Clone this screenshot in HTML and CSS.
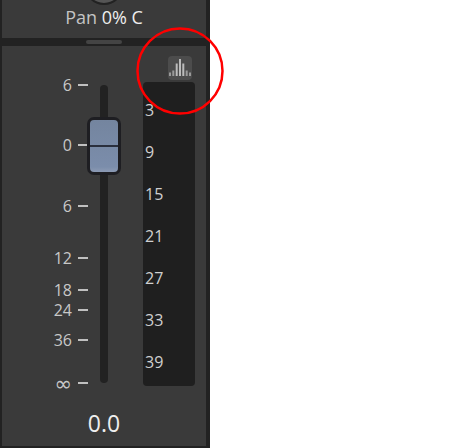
FILE: index.html
```html
<!DOCTYPE html>
<html lang="en">
<head>
<meta charset="utf-8">
<title>Channel strip</title>
<link rel="stylesheet" href="styles.css">
</head>
<body>
<div class="strip">
  <section class="pan">
    <div class="knob"></div>
    <div class="pan-label"><span class="muted">Pan</span> 0% C</div>
  </section>
  <div class="divider"><span class="grip"></span></div>
  <section class="fader-panel">
    <div class="fader-main">
      <div class="scale">
        <div class="tick"><span>6</span><i></i></div>
        <div class="tick"><span>0</span><i></i></div>
        <div class="tick"><span>6</span><i></i></div>
        <div class="tick"><span>12</span><i></i></div>
        <div class="tick"><span>18</span><i></i></div>
        <div class="tick"><span>24</span><i></i></div>
        <div class="tick"><span>36</span><i></i></div>
        <div class="tick"><span class="inf">∞</span><i></i></div>
      </div>
      <div class="track">
        <div class="thumb"></div>
      </div>
    </div>
    <div class="meter-col">
      <button class="meter-btn" aria-label="Spectrum">
        <svg width="24" height="24" viewBox="0 0 24 24"><path class="bars-dim" d="M1 20v-3.500h2v3.500zM21 20v-3.500h2v3.500zM4.300 20v-5.500h2v5.500zM17.700 20v-5.500h2v5.500z"/><path class="bars" d="M7.700 20v-12.500h2v12.500zM11 20v-17h2v17zM14.300 20v-12.500h2v12.500z"/></svg>
      </button>
      <div class="meter">
        <span>3</span><span>9</span><span>15</span><span>21</span><span>27</span><span>33</span><span>39</span>
      </div>
    </div>
    <div class="readout">0.0</div>
  </section>
</div>
<svg class="annotation" width="90" height="90" viewBox="0 0 90 90"><circle cx="45" cy="45" r="42.500"/></svg>
</body>
</html>
```
FILE: styles.css
```css
* { box-sizing: border-box; }
html, body { margin: 0; padding: 0; background: #fff; }
body { width: 455px; height: 448px; overflow: hidden; position: relative; font-family: "Open Sans", "Noto Sans", sans-serif; }
.strip { width: 210px; height: 448px; background: #222; padding: 0 4px 2px 2px; display: flex; flex-direction: column; }
.pan { height: 38px; background: #3a3a3a; position: relative; overflow: hidden; flex: none; display: flex; justify-content: center; }
.knob { position: absolute; left: 82px; top: -36px; width: 40px; height: 41px; border-radius: 50%; background: #555; border: 2px solid #222; }
.pan-label { margin-top: 4px; font-size: 18px; line-height: 26px; color: #eee; }
.muted { color: #c4c4c4; }
.divider { height: 8px; flex: none; background: #222; display: flex; align-items: center; justify-content: center; }
.grip { width: 36px; height: 4px; border-radius: 2px; background: #444; }
.fader-panel { flex: 1; background: #3a3a3a; display: grid; grid-template-columns: 141px 1fr; position: relative; }
.fader-main { position: relative; }
.scale { position: absolute; left: 0; top: 39px; width: 86px; display: grid; grid-template-rows: 60px 61px 52px 32px 20px 30px 43px 0; }
.tick { height: 0; display: flex; align-items: center; justify-content: flex-end; gap: 6px; }
.tick span { font-size: 16px; line-height: 22px; color: #c8c8c8; }
.tick .inf { font-family: "DejaVu Sans", sans-serif; font-size: 21px; padding-top: 2px; }
.tick i { width: 10px; height: 2px; background: #c0c0c0; flex: none; }
.track { position: absolute; left: 98px; top: 39px; width: 8px; height: 298px; border-radius: 4px; background: #222; }
.thumb { position: absolute; left: -13px; top: 32px; width: 34px; height: 58px; border-radius: 7px; border: 3px solid #1e1e22; background: linear-gradient(#74859f 0, #7b8dab 90%, #8c9ab4 100%); }
.thumb::after { content: ""; position: absolute; left: 0; right: 0; top: 25px; height: 2px; background: #2a2f3d; }
.meter-col { display: flex; flex-direction: column; align-items: flex-end; padding-top: 10px; padding-right: 11px; }
.meter-btn { width: 24px; height: 24px; margin: 0 3px 2px 0; padding: 0; border: 0; border-radius: 4px; background: #4c4c4c; display: block; }
.meter-btn svg { display: block; }
.bars { fill: #bbb; }
.bars-dim { fill: #999; }
.meter { width: 52px; height: 304px; border-radius: 4px; background: #1f1f1f; padding: 17px 0 0 2px; display: flex; flex-direction: column; gap: 20px; }
.meter span { font-size: 16px; line-height: 22px; color: #d0d0d0; }
.readout { position: absolute; left: 0; width: 204px; top: 361px; text-align: center; font-size: 23px; line-height: 32px; color: #eee; }
.annotation { position: absolute; left: 135px; top: 26px; }
.annotation circle { fill: none; stroke: #f00; stroke-width: 2.500; }
```
